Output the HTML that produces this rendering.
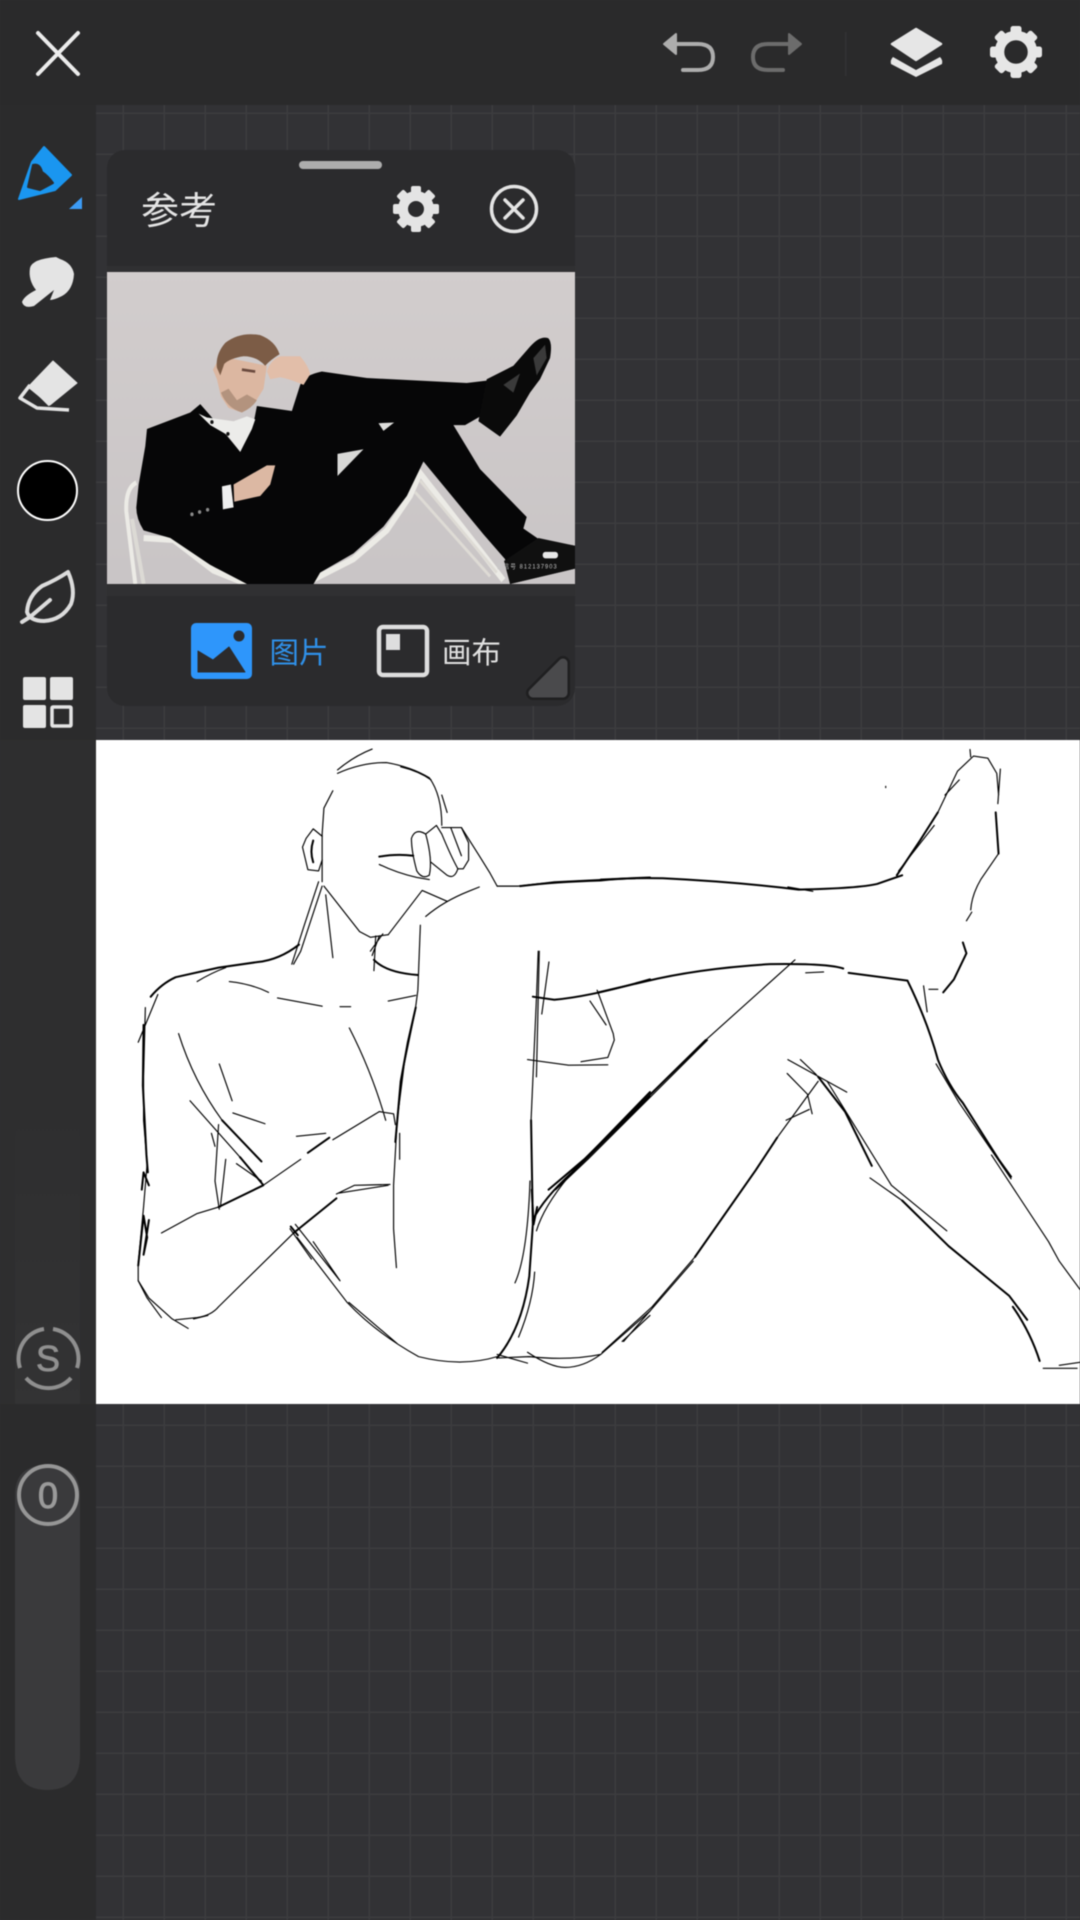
<!DOCTYPE html>
<html lang="zh"><head><meta charset="utf-8"><title>参考</title>
<style>
html,body{margin:0;padding:0;background:#323235}
body{width:1080px;height:1920px;overflow:hidden;position:relative}
svg{position:absolute;left:0;top:0;display:block}
svg.root{filter:blur(.5px)}
text{font-family:"Liberation Sans","Noto Sans CJK SC",sans-serif}
.k path{fill:none;stroke:#000;stroke-width:1.15;vector-effect:non-scaling-stroke;stroke-linecap:round;stroke-linejoin:round}
.k .t{stroke-width:2}
</style></head><body>
<svg class="root" width="1080" height="1920" viewBox="0 0 1080 1920" xmlns="http://www.w3.org/2000/svg">
<defs>
<pattern id="g" x="83" y="73" width="41" height="41" patternUnits="userSpaceOnUse">
<path d="M41 0V41M0 41H41" stroke="#3c3c3f" stroke-width="3" fill="none"/>
</pattern>
<linearGradient id="bg" x1="0" y1="0" x2="0" y2="1"><stop offset="0" stop-color="#d2cdcd"/><stop offset="1" stop-color="#c9c5c6"/></linearGradient>
<linearGradient id="sl" x1="0" y1="0" x2="0" y2="1"><stop offset="0" stop-color="#2e2e2f"/><stop offset="1" stop-color="#333334"/></linearGradient>
</defs>
<rect width="1080" height="1920" fill="#323235"/>
<rect x="96" y="105" width="984" height="1815" fill="url(#g)"/>
<rect width="1080" height="105" fill="#2a2a2b"/>
<rect y="105" width="96" height="1815" fill="#2b2b2c"/>
<rect y="740" width="96" height="664" fill="#2e2e2f"/>
<rect x="96" y="740" width="984" height="664" fill="#fff"/>

<!-- top bar -->
<path d="M38 33L78 74M78 33L38 74" stroke="#ececec" stroke-width="4" stroke-linecap="round" fill="none"/>
<path d="M664 44L676 34V54Z" fill="#adadad" stroke="#adadad" stroke-width="2" stroke-linejoin="round"/>
<path d="M676 44H698Q713 44 713 57Q713 70 698 70H683" stroke="#adadad" stroke-width="4" fill="none" stroke-linecap="round"/>
<path d="M801 44L789 34V54Z" fill="#6c6c6c" stroke="#6c6c6c" stroke-width="2" stroke-linejoin="round"/>
<path d="M789 44H768Q753 44 753 57Q753 70 768 70H783" stroke="#6c6c6c" stroke-width="4" fill="none" stroke-linecap="round"/>
<rect x="845" y="32" width="1.5" height="44" fill="#333334"/>
<path d="M916 29L941 44L916 60L892 44Z" fill="#e6e6e6" stroke="#e6e6e6" stroke-width="2.5" stroke-linejoin="round"/>
<path d="M893 57L916 70L940 57Q943 60 942 64L916 77L891 64Q890 60 893 57Z" fill="#e6e6e6"/>
<g transform="translate(1016 52)" fill="#e6e6e6">
<circle r="16.5" fill="none" stroke="#e6e6e6" stroke-width="9.5"/>
<rect x="-5.5" y="-26" width="11" height="9" rx="2.5"/><rect x="-5.5" y="-26" width="11" height="9" rx="2.5" transform="rotate(45)"/><rect x="-5.5" y="-26" width="11" height="9" rx="2.5" transform="rotate(90)"/><rect x="-5.5" y="-26" width="11" height="9" rx="2.5" transform="rotate(135)"/><rect x="-5.5" y="-26" width="11" height="9" rx="2.5" transform="rotate(180)"/><rect x="-5.5" y="-26" width="11" height="9" rx="2.5" transform="rotate(225)"/><rect x="-5.5" y="-26" width="11" height="9" rx="2.5" transform="rotate(270)"/><rect x="-5.5" y="-26" width="11" height="9" rx="2.5" transform="rotate(315)"/>
</g>

<!-- sidebar -->
<path d="M44 147L71 175L55 190L19 199L32 162Z" fill="#1a96f0" stroke="#1a96f0" stroke-width="2" stroke-linejoin="round"/>
<path d="M33 165Q40 163 42 172Q48 176 53 183L40 190L28 187Z" fill="#2b2b2c" stroke="#2b2b2c" stroke-linejoin="round" stroke-width="2"/>
<path d="M82 197V209H69Z" fill="#3c9bf5"/>
<path d="M30 268Q32 259 56 257L60 259Q72 263 74 274Q73 290 62 296Q54 300 50 300L54 290L34 306Q24 309 22 302Q24 296 36 290Q28 280 30 268Z" fill="#e4e4e4"/>
<path d="M53 361L77 383L50 405L28 387Z" fill="#e4e4e4" stroke="#e4e4e4" stroke-linejoin="round"/>
<path d="M30 385L20 398L37 408L69 410M30 385L50 405" fill="none" stroke="#e4e4e4" stroke-width="3.5" stroke-linejoin="round"/>
<circle cx="47.5" cy="490.5" r="29.5" fill="#000" stroke="#fff" stroke-width="2"/>
<path d="M68 572Q76 590 71 604Q62 620 44 621Q30 621 27 612Q28 596 42 586Q56 580 68 572Z" fill="none" stroke="#dcdcdc" stroke-width="4" stroke-linejoin="round"/>
<path d="M22 622L30 617L50 600" fill="none" stroke="#dcdcdc" stroke-width="4" stroke-linecap="round"/>
<rect x="23" y="677" width="23" height="23" rx="2" fill="#e4e4e4"/><rect x="50" y="677" width="23" height="23" rx="2" fill="#e4e4e4"/>
<rect x="23" y="705" width="23" height="23" rx="2" fill="#e4e4e4"/>
<rect x="52" y="707" width="19" height="19" rx="1" fill="none" stroke="#e4e4e4" stroke-width="3.5"/>

<!-- sliders -->
<path d="M15 1110Q15 1079 47 1079Q80 1079 80 1110V1404H15Z" fill="url(#sl)"/>
<g fill="none" stroke="#8f8f8f" stroke-width="4" stroke-linecap="butt">
<path d="M44 1329A30 30 0 0 0 20 1368"/><path d="M53 1329A30 30 0 0 1 77 1368"/><path d="M26 1378A30 30 0 0 0 71 1378"/>
</g>
<text x="48" y="1371" text-anchor="middle" font-size="36" fill="#909090" stroke="#909090" stroke-width=".8">S</text>
<path d="M15 1495Q15 1465 47 1465Q80 1465 80 1495V1755Q80 1790 47 1790Q15 1790 15 1755Z" fill="#3a3a3c"/>
<circle cx="48" cy="1495" r="29" fill="#3a3a3c" stroke="#969696" stroke-width="4"/>
<text x="48" y="1508" text-anchor="middle" font-size="36" fill="#9a9a9a" stroke="#9a9a9a" stroke-width="1">0</text>

<!-- panel -->
<rect x="107" y="150" width="468" height="556" rx="18" fill="#2b2b2d"/>
<rect x="107" y="266" width="468" height="6" fill="#303032"/>
<rect x="107" y="584" width="468" height="12" fill="#303032"/>
<rect x="299" y="161" width="83" height="8" rx="4" fill="#adadad"/>
<text x="141" y="224" font-size="38" fill="#e4e4e4">参考</text>
<g transform="translate(416 209)" fill="#e4e4e4">
<circle r="13" fill="none" stroke="#e4e4e4" stroke-width="10"/>
<rect x="-5" y="-23" width="10" height="8" rx="2"/><rect x="-5" y="-23" width="10" height="8" rx="2" transform="rotate(45)"/><rect x="-5" y="-23" width="10" height="8" rx="2" transform="rotate(90)"/><rect x="-5" y="-23" width="10" height="8" rx="2" transform="rotate(135)"/><rect x="-5" y="-23" width="10" height="8" rx="2" transform="rotate(180)"/><rect x="-5" y="-23" width="10" height="8" rx="2" transform="rotate(225)"/><rect x="-5" y="-23" width="10" height="8" rx="2" transform="rotate(270)"/><rect x="-5" y="-23" width="10" height="8" rx="2" transform="rotate(315)"/>
</g>
<circle cx="514" cy="209" r="22.5" fill="none" stroke="#e4e4e4" stroke-width="3.5"/>
<path d="M505 200L523 218M523 200L505 218" stroke="#e4e4e4" stroke-width="3.5" stroke-linecap="round"/>

<!-- photo -->
<svg x="107" y="272" width="468" height="312" viewBox="20 345 1405 815" preserveAspectRatio="none">
<rect x="20" y="345" width="1405" height="815" fill="url(#bg)"/>
<g fill="none" stroke="#ecebe6" stroke-width="12">
<path d="M108 895Q75 910 78 970L105 1160"/><path d="M95 990L130 1160" stroke="#dcdad5"/>
<path d="M130 1040L220 1045L340 1125L440 1160" stroke-width="16"/>
<path d="M640 1148L760 1095L860 1020L930 930L960 870L1210 1150" stroke-width="16"/>
<path d="M945 920L1170 1140M960 890L1190 1130" stroke-width="8" stroke="#dedbd5"/>
</g>
<path d="M140 755L270 712L300 690L330 720L420 815L460 740L470 695L575 708L600 640Q610 615 665 605L800 622L1100 635L1195 625L1200 690L1135 725L1095 745L1060 745L1140 860L1280 985L1270 1015L1320 1045L1425 1060V1120L1230 1160L1215 1095L1150 1030L970 840L920 930L850 1010L760 1080L660 1130L640 1160H440L330 1110L210 1040L130 1020Q108 990 108 960L115 900L135 800Z" fill="#060607"/>
<path d="M1160 625L1240 590L1290 540Q1320 510 1345 518Q1358 530 1350 570L1320 625L1290 660L1250 720L1200 775L1135 735Z" fill="#0a0a0a"/>
<path d="M1300 570L1335 535L1340 570L1310 615ZM1210 640L1260 610L1240 660Z" fill="#3a3a3a"/>
<path d="M1315 1040L1425 1060V1120L1230 1160L1212 1100Z" fill="#101010"/>
<path d="M712 820L790 808L712 878Z" fill="#d8d8d6"/><path d="M835 740L882 738L850 760Z" fill="#dededc"/>
<path d="M295 715L330 745L380 770L420 815L455 755L465 730L440 722L400 735L320 725Z" fill="#ececea"/>
<path d="M338 600L360 565L500 590L490 650L465 685L425 712L385 700L362 670L350 625Z" fill="#dcb7a1"/>
<path d="M362 660Q380 700 425 712Q455 700 470 680L440 665L410 680L385 650Z" fill="#b3937e"/>
<path d="M350 595Q345 560 375 530Q420 500 480 510Q525 525 538 560Q510 575 495 590Q470 565 430 565Q390 570 372 585L360 615Z" fill="#7c5c46"/>
<path d="M500 605Q510 575 540 565L600 565Q625 590 630 612L610 640Q570 625 540 620L510 625Z" fill="#e2bea9"/>
<path d="M400 900L500 850L525 850L510 900L480 930L402 945Z" fill="#dcb8a3"/>
<path d="M365 905L392 900L400 960L368 965Z" fill="#efefef"/>
<path d="M425 600L465 605" stroke="#6a4a3e" stroke-width="7" fill="none"/>
<g fill="#8a8a8a"><circle cx="275" cy="978" r="5"/><circle cx="298" cy="972" r="5"/><circle cx="322" cy="966" r="5"/></g>
<g fill="#111"><circle cx="335" cy="737" r="5"/><circle cx="383" cy="768" r="5"/></g>
<rect x="1328" y="1076" width="46" height="17" rx="8" fill="#e8e8e8"/>
<text x="1190" y="1120" font-size="17" fill="#c9c9c9" textLength="180">微信号 812137903</text>
</svg>

<rect x="191" y="623" width="61" height="56" rx="5" fill="#2e96fb"/>
<circle cx="239" cy="636" r="5.5" fill="#2b2b2d"/>
<path d="M198 672V651L213 660L229 647L245 672Z" fill="#2b2b2d" stroke="#2b2b2d" stroke-linejoin="round"/>
<text x="269.500" y="663" font-size="29.500" fill="#2f90e8">图片</text>
<rect x="379" y="627" width="48" height="48" rx="4" fill="none" stroke="#dedede" stroke-width="4.5"/>
<rect x="386" y="634" width="14" height="16" fill="#dedede"/>
<text x="442" y="663" font-size="29.500" fill="#e0e0e0">画布</text>
<path d="M563 663L533 693H563Z" fill="#1f1f20" stroke="#1f1f20" stroke-width="14" stroke-linejoin="round"/>
<path d="M563 663L533 693H563Z" fill="#4a4a4c" stroke="#4a4a4c" stroke-width="9" stroke-linejoin="round"/>

<!-- sketch left -->
<g class="k" transform="translate(90 730) scale(.35714 .43365)">
<path d="M693 100Q760 75 830 75Q900 85 950 110Q985 150 985 220"/>
<path d="M693 92Q740 60 790 44M870 85Q920 95 955 115M985 150L1000 190"/>
<path d="M680 140L655 180L650 240L650 350"/>
<path d="M605 250L625 228L650 245M605 250L595 270L610 322L640 325L650 300"/><path class="t" d="M625 255Q615 280 625 305"/>
<path d="M655 360L755 465L785 478L835 472"/>
<path d="M650 360L630 410L590 510L570 540M640 350L600 450L565 540M660 380L680 525"/>
<path d="M800 475L795 555M820 470L785 510M810 475L790 520"/>
<path d="M835 472L930 370L1000 395"/>
<path class="t" d="M810 292Q860 285 905 290"/><path d="M810 310Q860 330 915 340L950 345"/>
<path d="M900 250Q910 225 940 240Q960 300 950 335Q930 345 915 325Q900 280 900 250"/>
<path d="M940 240L970 220L985 240Q1010 290 1030 320Q1020 345 1000 335L955 305"/>
<path d="M985 225L1040 225L1060 260L1060 300L1045 320L1030 320M1010 225L1040 290"/>
<path d="M1040 225L1090 290L1120 330M1120 330L1140 360"/>
<path d="M1140 360L1200 360L1300 350L1430 345"/><path class="t" d="M1430 345L1568 340"/>
<path d="M1090 362L1060 372Q990 395 940 430"/>
<path d="M925 450L918 600L910 650L880 770L860 900L850 1050L850 1150L858 1240"/>
<path class="t" d="M912 640L890 720L870 810L855 950"/><path d="M867 930V990"/>
<path class="t" d="M795 530Q830 560 918 565"/>
<path class="t" d="M585 495Q530 530 470 535L360 548L240 570Q200 585 170 615"/>
<path d="M300 580Q340 560 380 548"/>
<path d="M155 640L150 800L150 900L160 1000L150 1100L135 1230L135 1270L160 1310L200 1355M135 720L190 610"/>
<path class="t" d="M150 680L148 820L158 980L162 1020"/>
<path class="t" d="M135 1235L150 1120L160 1170L150 1210L165 1130M145 1060L150 1020L165 1050"/>
<path d="M135 1270L165 1310L230 1358L275 1380"/>
<path d="M240 1360L300 1355Q340 1350 360 1330L570 1160"/><path class="t" d="M570 1160L690 1080"/>
<path d="M330 1350L290 1358"/>
<path d="M200 1160L300 1115L360 1100"/><path class="t" d="M360 1100L485 1050"/><path d="M485 1050L590 990"/><path class="t" d="M610 975L670 940"/><path d="M690 940L800 885M680 945L810 880"/>
<path d="M690 1070L740 1050L840 1048M695 1068L835 1050"/>
<path class="t" d="M562 1145L582 1165"/>
<path d="M560 1150L620 1220M575 1140L700 1270M625 1180L700 1270"/>
<path d="M580 1170L720 1320Q800 1390 920 1445Q1040 1470 1140 1445M725 1320L860 1415"/>
<path class="t" d="M1140 1448Q1210 1380 1230 1260L1240 1140L1235 900"/>
<path d="M1235 900L1250 620L1255 510"/>
<path d="M1190 1275Q1225 1210 1232 1040M1245 1250Q1240 1320 1200 1400"/>
<path class="t" d="M1237 1060L1242 1140L1252 1100"/>
<path class="t" d="M1240 1130Q1270 1080 1350 1020L1568 835"/>
<path d="M1250 1155Q1270 1100 1340 1030L1568 845"/>
<path d="M1145 1448L1230 1445Q1340 1455 1430 1440L1568 1340M1225 1435Q1290 1470 1330 1470Q1380 1470 1430 1440M1140 1440L1225 1460"/>
<path d="M1490 1410L1568 1350"/>
<path d="M390 580Q450 585 500 605M525 618L650 637M700 638L730 638M835 625L912 612"/>
<path d="M248 700Q290 810 370 900"/><path class="t" d="M370 900L480 995"/>
<path d="M280 855L420 985"/><path class="t" d="M420 985L484 1048"/>
<path d="M362 770L398 855M400 883L490 908M578 937L660 930"/>
<path d="M726 687Q790 790 828 900M810 880L850 885L855 910"/>
<path d="M360 910L350 1040L362 1105M340 930L350 960M380 990L365 1100M410 1000L480 1040"/>
<path class="t" d="M1240 615L1300 622Q1400 615 1568 575"/>
<path d="M1258 510L1250 800M1285 535L1265 655"/>
<path d="M1420 600L1465 700L1468 715L1450 755L1375 765M1400 625L1445 680M1225 760L1340 773L1450 772"/>
</g>

<!-- sketch right -->
<g class="k" transform="translate(520 730) scale(.35714 .43365)">
<path class="t" d="M0 360Q100 350 225 347Q300 340 400 342Q600 350 780 368Q950 365 1000 355L1070 335"/>
<path d="M750 362L820 372"/>
<path class="t" d="M1055 335L1120 255L1170 190"/>
<path d="M1170 190L1225 95L1270 60L1310 65L1335 100L1340 150"/>
<path class="t" d="M1332 190L1340 285"/><path d="M1340 285L1290 345Q1265 380 1262 415"/>
<path d="M1230 115L1190 150M1060 325L1160 220M1345 90L1338 170M1260 45L1262 62M1250 440L1265 420"/>
<path class="t" d="M1240 490L1250 515L1215 575L1185 605"/>
<path d="M1130 590L1140 650M1145 598L1170 598"/>
<path class="t" d="M920 560L1085 578Q1140 670 1170 760Q1200 820 1240 860L1340 990L1375 1030"/>
<path d="M1165 770L1230 860L1375 1035M1320 980L1480 1180L1510 1225L1568 1290"/>
<path class="t" d="M905 550Q860 538 700 540Q500 550 350 580L220 605"/>
<path d="M800 560L850 558"/>
<path d="M770 530L520 715"/><path class="t" d="M520 715L180 990L80 1060"/>
<path d="M525 715L190 990L100 1060"/>
<path d="M835 810L720 940"/><path class="t" d="M720 940L660 1015L490 1215"/>
<path d="M490 1215L370 1330L230 1435M485 1225L290 1410M810 875L745 900"/>
<path d="M750 760L915 835M785 760L830 795M748 792L805 840L818 885"/>
<path class="t" d="M835 800L910 880L985 1005"/>
<path d="M860 810L1040 1050L1195 1155M980 1033L1070 1085"/>
<path class="t" d="M1070 1085L1200 1190L1370 1305L1420 1360"/>
<path class="t" d="M1380 1330Q1430 1390 1455 1455"/>
<path d="M1465 1472L1560 1472M1510 1465L1568 1458M1024 130V133"/>
</g>
</svg>
</body></html>
